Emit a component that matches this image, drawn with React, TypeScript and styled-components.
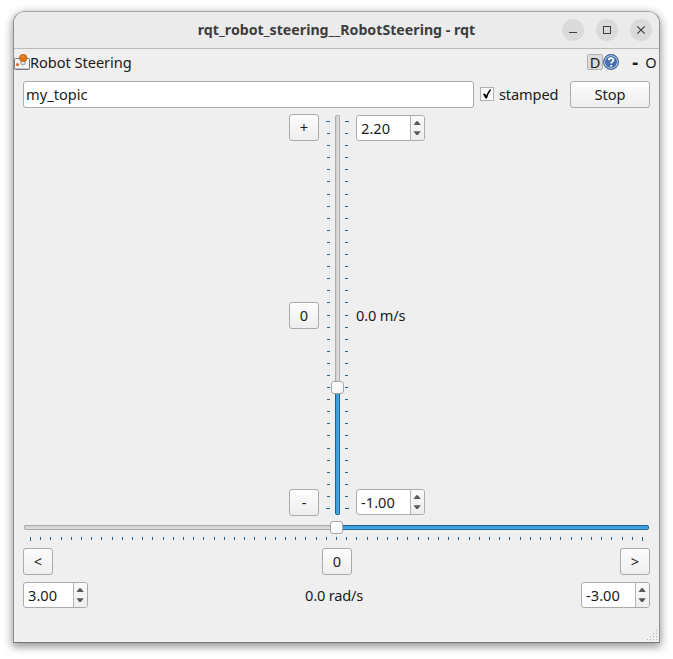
import React from "react";
import styled, { createGlobalStyle } from "styled-components";

const Global = createGlobalStyle`
  *, *::before, *::after { box-sizing: border-box; }
  html, body { margin: 0; background: #fff; }
  body { font-family: "Noto Sans", "Open Sans", sans-serif; font-size: 14.6px; color: #1b1b1b; }
`;

const Desktop = styled.div`
  width: 673px;
  height: 659px;
  padding: 11px 13px 16px 13px;
  overflow: hidden;
`;

const Window = styled.main`
  width: 647px;
  height: 632px;
  display: flex;
  flex-direction: column;
  background: #efefef;
  border: 1px solid #a2a2a2;
  border-bottom-color: #777;
  border-right-color: #8e8e8e;
  border-left-color: #8e8e8e;
  border-radius: 12px 12px 0 0;
  box-shadow: 0 3px 9px 1px rgba(0, 0, 0, 0.4);
`;

const TitleBar = styled.header`
  display: grid;
  grid-template-columns: 105px 1fr 105px;
  align-items: center;
  height: 37px;
  flex: none;
  background: #ebebeb;
  border-bottom: 1px solid #bababa;
  border-radius: 11px 11px 0 0;
`;

const Title = styled.h1`
  grid-column: 2;
  margin: 0;
  text-align: center;
  font-size: 14.2px;
  line-height: 20px;
  font-weight: 700;
  color: #3d3d3d;
  white-space: nowrap;
`;

const WindowControls = styled.div`
  display: flex;
  gap: 12px;
  justify-content: flex-end;
  padding-right: 7px;
`;

const RoundButton = styled.button`
  width: 22px;
  height: 22px;
  padding: 0;
  border: 0;
  border-radius: 50%;
  background: #dadada;
  svg { display: block; }
`;

const DockBar = styled.div`
  display: flex;
  align-items: center;
  height: 26px;
  margin-bottom: 2px;
  flex: none;
`;

const Text = styled.span<{ $w: number; $spacing?: number }>`
  width: ${(p) => p.$w}px;
  line-height: 20px;
  letter-spacing: ${(p) => p.$spacing ?? 0}px;
  white-space: nowrap;
`;

const DockTools = styled.div`
  display: flex;
  align-items: center;
  margin-left: auto;
`;

const DockKey = styled.span`
  width: 16px;
  height: 16px;
  border: 1px solid #b4b4b4;
  border-radius: 2px;
  background: #dcdcdc;
  line-height: 14px;
  text-align: center;
`;

const DockSign = styled.span`
  width: 16px;
  text-align: center;
  line-height: 20px;
`;

const FloatSign = styled(DockSign)`
  margin-left: 8px;
  font-size: 18px;
  font-weight: 800;
`;

const Body = styled.div`
  display: flex;
  flex-direction: column;
  padding: 4px 9px 0;
`;

const TopRow = styled.div`
  display: flex;
  align-items: center;
  height: 27px;
`;

const TopicInput = styled.input`
  width: 451px;
  height: 27px;
  padding: 0 2px 2px;
  border: 1px solid #ababab;
  border-radius: 3px;
  background: #fff;
  font: inherit;
  color: inherit;
  outline: 0;
  letter-spacing: 0.03px;
`;

const CheckLabel = styled.label`
  display: flex;
  align-items: center;
  height: 26px;
  margin-bottom: 1px;
  width: 90px;
  margin-left: 6px;
  gap: 5px;
`;

const CheckBox = styled.span`
  width: 14px;
  height: 14px;
  border: 1px solid #b0b0b0;
  background: #fff;
  svg { display: block; }
`;

const PushButton = styled.button<{ $w?: number }>`
  width: ${(p) => p.$w ?? 30}px;
  height: 27px;
  padding: 0 0 1px;
  border: 1px solid #ababab;
  border-radius: 3px;
  background: linear-gradient(#fdfdfd, #eeeeee);
  font: inherit;
  line-height: 24px;
  color: inherit;
`;

const Linear = styled.section`
  display: grid;
  grid-template-columns: 30px 23px 80px;
  gap: 7px;
  height: 402px;
  margin: 6px 0 0 266px;
`;

const LinearColumn = styled.div`
  display: flex;
  flex-direction: column;
  justify-content: space-between;
`;

const ValueColumn = styled(LinearColumn)`
  padding: 1px 0;
`;

const VSlider = styled.div`
  display: grid;
  grid-template-columns: 4px 5px 4px;
  gap: 5px;
  height: 402px;
  padding-top: 1px;
`;

const VTrack = styled.div`
  display: flex;
  flex-direction: column;
  align-items: center;
  height: 400px;
`;

const VRail = styled.div<{ $h: number; $filled?: boolean }>`
  width: 5px;
  height: ${(p) => p.$h}px;
  flex: none;
  border: 1px solid ${(p) => (p.$filled ? "#20638f" : "#ababab")};
  border-radius: ${(p) => (p.$filled ? "0 0 2px 2px" : "2px 2px 0 0")};
  border-${(p) => (p.$filled ? "top" : "bottom")}: 0;
  background: ${(p) => (p.$filled ? "linear-gradient(90deg, #3b98d5, #47aae9)" : "linear-gradient(90deg, #cfcfcf, #e0e0e0)")};
`;

const Handle = styled.div`
  width: 13px;
  height: 13px;
  flex: none;
  border: 1px solid #a8a8a8;
  border-radius: 3px;
  background: linear-gradient(135deg, #fff, #f4f4f4);
`;

const HSlider = styled.div`
  display: flex;
  align-items: center;
  width: 625px;
  height: 13px;
  margin: 5px 0 0 1px;
`;

const HRail = styled.div<{ $w: number; $filled?: boolean }>`
  width: ${(p) => p.$w}px;
  height: 5px;
  flex: none;
  border: 1px solid ${(p) => (p.$filled ? "#20638f" : "#ababab")};
  border-radius: ${(p) => (p.$filled ? "0 2px 2px 0" : "2px 0 0 2px")};
  border-${(p) => (p.$filled ? "left" : "right")}: 0;
  background: ${(p) => (p.$filled ? "linear-gradient(#3b98d5, #47aae9)" : "linear-gradient(#cfcfcf, #e0e0e0)")};
`;

const Scale = styled.svg`
  display: block;
`;

const HScale = styled(Scale)`
  margin: 3px 0 0 7px;
`;

const ButtonRow = styled.div`
  display: flex;
  justify-content: space-between;
  width: 627px;
  margin-top: 7px;
`;

const CenterButton = styled.div`
  display: flex;
  margin-left: 1px;
`;

const ValueRow = styled.div`
  display: flex;
  align-items: center;
  width: 627px;
  margin-top: 7px;
`;

const Spin = styled.div<{ $w: number }>`
  display: flex;
  width: ${(p) => p.$w}px;
  height: 26px;
  flex: none;
  border: 1px solid #ababab;
  border-radius: 3px;
  background: #fff;
  overflow: hidden;
`;

const SpinValue = styled.span`
  flex: 1;
  padding-left: 4px;
  line-height: 24px;
  letter-spacing: 0.05px;
`;

const SpinArrows = styled.span`
  display: block;
  width: 14px;
  border-left: 1px solid #b5b5b5;
  background: linear-gradient(#fafafa, #eee);
  svg { display: block; }
`;

const RadText = styled(Text)`
  margin: 0 auto 0 217px;
`;

const SizeGrip = styled.footer`
  display: flex;
  justify-content: flex-end;
  margin-top: auto;
  padding: 0 1px 1px;
  svg { display: block; }
`;

const SpinBox = ({ value, width }: { value: string; width: number }) => (
  <Spin $w={width}>
    <SpinValue>{value}</SpinValue>
    <SpinArrows>
      <svg width="13" height="24" viewBox="0 0 13 24">
        <path d="M2.5 9L5.3 5.2h1.6L9.8 9zM2.5 15.2h7.3L6.9 19H5.3z" fill="#595959" />
      </svg>
    </SpinArrows>
  </Spin>
);

const verticalTicks = Array.from({ length: 33 }, (_, i) => Math.round(6 + (i * 387) / 32));
const horizontalTicks = Array.from({ length: 61 }, (_, i) => Math.round(i * 10.2));

const VScale = ({ side }: { side: "left" | "right" }) => (
  <Scale width="4" height="400" shapeRendering="crispEdges">
    {verticalTicks.map((y, i) => {
      const long = i === 0 || i === verticalTicks.length - 1;
      return <rect key={y} x={side === "left" && !long ? 1 : 0} y={y} width={long ? 4 : 3} height="1" fill="#20638f" />;
    })}
  </Scale>
);

const PluginIcon = () => (
  <svg width="16" height="16" viewBox="0 0 16 16">
    <rect x=".5" y="4.5" width="15" height="11" rx=".8" fill="#f4f4f4" stroke="#777" />
    <path d="M1 14.5h14" stroke="#c4c4c4" />
    <rect x="2" y="9.2" width="3" height="2.8" rx="1" fill="#e06b24" />
    <ellipse cx="9" cy="8.8" rx="2.3" ry="2.2" fill="#d5d5d5" stroke="#8d8d8d" strokeWidth=".8" />
    <path d="M9 6v3.6" stroke="#f8f8f8" strokeWidth="1.6" />
    <circle cx="9.2" cy="4" r="3.7" fill="#df7410" stroke="#bd5b0d" strokeWidth=".7" />
    <path d="M7.5 3.4a2 2 0 0 1 2-1.2" stroke="#f3ad62" fill="none" />
  </svg>
);

const HelpIcon = () => (
  <svg width="16" height="16" viewBox="0 0 16 16">
    <circle cx="8" cy="8" r="7.4" fill="#dfe8f3" stroke="#2d5c9b" strokeWidth="1.1" />
    <circle cx="8" cy="8" r="6.1" fill="#4470ad" />
    <path d="M5.8 6.1C5.9 3.4 10.5 3.5 10.4 6.1c0 1.5-2.2 1.6-2.2 3.3M8.2 11v1.8" fill="none" stroke="#fff" strokeWidth="1.8" />
  </svg>
);

export default function App() {
  return (
    <>
      <Global />
      <Desktop>
        <Window>
          <TitleBar>
            <Title>rqt_robot_steering__RobotSteering - rqt</Title>
            <WindowControls>
              <RoundButton aria-label="Minimize">
                <svg width="22" height="22"><path d="M7 13.5h8" stroke="#3d3d3d" /></svg>
              </RoundButton>
              <RoundButton aria-label="Maximize">
                <svg width="22" height="22"><rect x="7.5" y="7.5" width="7" height="7" fill="none" stroke="#3d3d3d" /></svg>
              </RoundButton>
              <RoundButton aria-label="Close">
                <svg width="22" height="22"><path d="M7.3 7.3l7.4 7.4M14.7 7.3l-7.4 7.4" stroke="#3d3d3d" strokeWidth="1.2" /></svg>
              </RoundButton>
            </WindowControls>
          </TitleBar>
          <DockBar>
            <PluginIcon />
            <Text $w={102} $spacing={-0.04}>Robot Steering</Text>
            <DockTools>
              <DockKey>D</DockKey>
              <HelpIcon />
              <FloatSign>-</FloatSign>
              <DockSign>O</DockSign>
            </DockTools>
          </DockBar>
          <Body>
            <TopRow>
              <TopicInput defaultValue="my_topic" />
              <CheckLabel>
                <CheckBox>
                  <svg width="12" height="12"><path d="M2 6.2l1.9-1 1.3 2.3Q6.6 3.8 8.8 1.4h1.6Q7.2 5.4 5.9 10.6H4.6z" fill="#000" /></svg>
                </CheckBox>
                <Text $w={60} $spacing={-0.13}>stamped</Text>
              </CheckLabel>
              <PushButton $w={80}>Stop</PushButton>
            </TopRow>
            <Linear>
              <LinearColumn>
                <PushButton>+</PushButton>
                <PushButton>0</PushButton>
                <PushButton>-</PushButton>
              </LinearColumn>
              <VSlider>
                <VScale side="left" />
                <VTrack>
                  <VRail $h={266} />
                  <Handle />
                  <VRail $h={121} $filled />
                </VTrack>
                <VScale side="right" />
              </VSlider>
              <ValueColumn>
                <SpinBox value="2.20" width={69} />
                <Text $w={60} $spacing={-0.18}>0.0 m/s</Text>
                <SpinBox value="-1.00" width={69} />
              </ValueColumn>
            </Linear>
            <HSlider>
              <HRail $w={306} />
              <Handle />
              <HRail $w={306} $filled />
            </HSlider>
            <HScale width="613" height="4" shapeRendering="crispEdges">
              {horizontalTicks.map((x, i) => (
                <rect key={x} x={x} y="0" width="1" height={i === 0 || i === 60 ? 4 : 3} fill="#20638f" />
              ))}
            </HScale>
            <ButtonRow>
              <PushButton>&lt;</PushButton>
              <CenterButton><PushButton>0</PushButton></CenterButton>
              <PushButton>&gt;</PushButton>
            </ButtonRow>
            <ValueRow>
              <SpinBox value="3.00" width={65} />
              <RadText $w={70} $spacing={-0.18}>0.0 rad/s</RadText>
              <SpinBox value="-3.00" width={69} />
            </ValueRow>
          </Body>
          <SizeGrip>
            <svg width="11" height="11" fill="#b4b4b4">
              {[0, 1, 2, 3].map((r) =>
                Array.from({ length: r + 1 }, (_, c) => (
                  <rect key={`${r}-${c}`} x={9 - c * 3} y={r * 3} width="1" height="1" />
                ))
              )}
            </svg>
          </SizeGrip>
        </Window>
      </Desktop>
    </>
  );
}
